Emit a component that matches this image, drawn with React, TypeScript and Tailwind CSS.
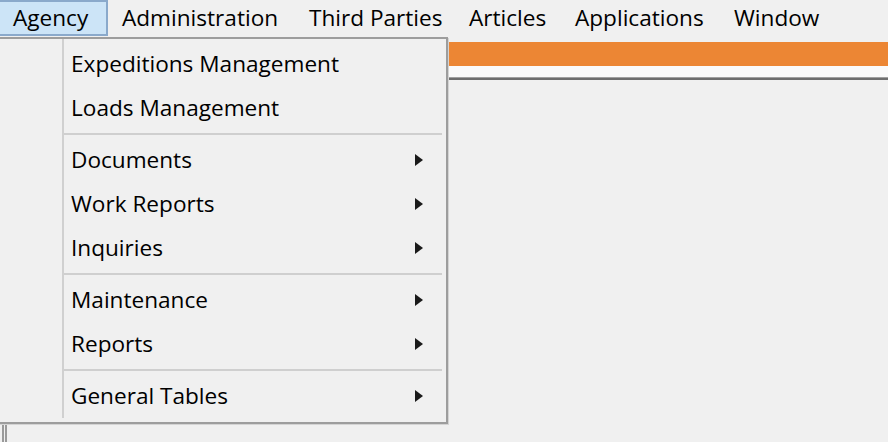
import React from 'react';

// text starts at 15px inside each item; widths keep the captions where the reference has them
const menuBar = [
  { label: 'Agency', w: 'w-[108px]' },
  { label: 'Administration', w: 'w-[187px]' },
  { label: 'Third Parties', w: 'w-[160px]' },
  { label: 'Articles', w: 'w-[106px]' },
  { label: 'Applications', w: 'w-[159px]' },
  { label: 'Window', w: 'w-[120px]' },
];

type Entry = { label: string; sub?: boolean } | 'sep';

const entries: Entry[] = [
  { label: 'Expeditions Management' },
  { label: 'Loads Management' },
  'sep',
  { label: 'Documents', sub: true },
  { label: 'Work Reports', sub: true },
  { label: 'Inquiries', sub: true },
  'sep',
  { label: 'Maintenance', sub: true },
  { label: 'Reports', sub: true },
  'sep',
  { label: 'General Tables', sub: true },
];

function Arrow() {
  return (
    <svg width="8" height="12" viewBox="0 0 8 12" className="mr-[23px]">
      <path d="M0 0 L8 6 L0 12 Z" fill="#1a1a1a" />
    </svg>
  );
}

export default function App() {
  return (
    <div className="relative w-[888px] h-[442px] overflow-hidden bg-[#f0f0f0] font-['Open_Sans',sans-serif] text-[22.6px] text-black">
      {/* menu bar */}
      <div className="flex h-[37px] items-start">
        {menuBar.map((m, i) => (
          <div
            key={m.label}
            className={
              i === 0
                ? `${m.w} shrink-0 flex items-center pl-[13px] h-[36px] bg-[#cce4f7] border-2 border-l-0 border-[#8aa9cb]`
                : `${m.w} shrink-0 flex items-center pl-[14px] h-[36px] whitespace-nowrap`
            }
          >
            {m.label}
          </div>
        ))}
      </div>

      {/* workspace strip */}
      <div className="mt-[5px] h-[24px] bg-[#ec8634]" />
      <div className="h-[11px] bg-[#fafafa]" />
      <div className="h-[1px] bg-[#a0a0a0]" />
      <div className="h-[2px] bg-[#6e6e6e]" />

      {/* frame at the bottom left */}
      <div className="absolute left-[2px] top-[424px] bottom-0 w-[5px] border-l-2 border-r-2 border-[#9a9a9a]" />

      {/* dropdown */}
      <div className="absolute left-[-2px] top-[37px] w-[450px] h-[387px] bg-[#f0f0f0] border-2 border-[#9d9d9d] pt-[3px] shadow-[1px_1px_0_#d4d4d4]">
        <div className="absolute left-[62px] top-0 bottom-[4px] w-[2px] bg-[#d0d0d0]" />
        {entries.map((e, i) =>
          e === 'sep' ? (
            <div key={i} className="h-[8px] flex items-center pl-[64px] pr-[4px]">
              <div className="w-full h-[2px] bg-[#cfcfcf]" />
            </div>
          ) : (
            <div key={i} className="h-[44px] flex items-center justify-between pl-[71px]">
              <span className="whitespace-nowrap">{e.label}</span>
              {e.sub && <Arrow />}
            </div>
          )
        )}
      </div>
    </div>
  );
}
